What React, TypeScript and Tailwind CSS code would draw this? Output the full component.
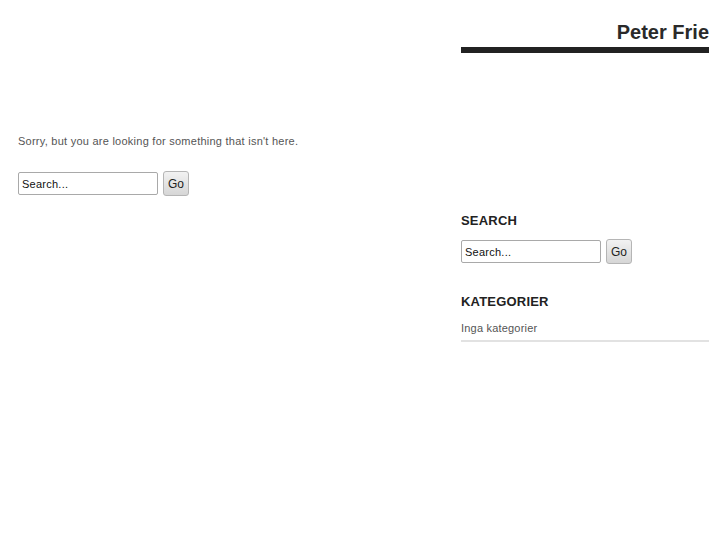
import React from "react";

function SearchForm() {
  return (
    <form className="flex items-center gap-[5px]" onSubmit={(e) => e.preventDefault()}>
      <input
        type="text"
        defaultValue="Search..."
        className="h-[23px] w-[140px] rounded-[2px] border border-[#a9a9a9] bg-white px-[3px] text-[11px] tracking-[0.25px] text-[#111] outline-none"
      />
      <button
        type="submit"
        className="h-[25px] w-[26px] rounded-[3px] border border-[#b5b5b5] bg-gradient-to-b from-[#f2f2f2] to-[#d6d6d6] text-[12px] text-[#222]"
      >
        Go
      </button>
    </form>
  );
}

export default function App() {
  return (
    <div
      className="flex min-h-[545px] bg-white px-[18px] text-[#555]"
      style={{ fontFamily: '"Liberation Sans", Arial, sans-serif' }}
    >
      <main className="flex-1 pt-[133px]">
        <p className="text-[11px] leading-[16px] tracking-[0.25px]">
          Sorry, but you are looking for something that isn't here.
        </p>
        <div className="mt-[22px]">
          <SearchForm />
        </div>
      </main>

      <aside className="w-[248px]">
        <header className="pt-[20px]">
          <h1 className="text-right text-[20px] font-bold leading-[24px] text-[#2a2a2a]">
            Peter Frie
          </h1>
          <div className="mt-[3px] h-[6px] bg-[#222]" />
        </header>

        <section className="mt-[160px]">
          <h2 className="text-[13px] font-bold leading-[16px] tracking-[0.2px] text-[#222]">SEARCH</h2>
          <div className="mt-[10px]">
            <SearchForm />
          </div>
        </section>

        <section className="mt-[30px]">
          <h2 className="text-[13px] font-bold leading-[16px] tracking-[0.2px] text-[#222]">KATEGORIER</h2>
          <ul className="mt-[11px]">
            <li className="border-b-2 border-[#e2e2e2] pb-[5px] text-[11px] leading-[14px] tracking-[0.2px]">
              Inga kategorier
            </li>
          </ul>
        </section>
      </aside>
    </div>
  );
}
